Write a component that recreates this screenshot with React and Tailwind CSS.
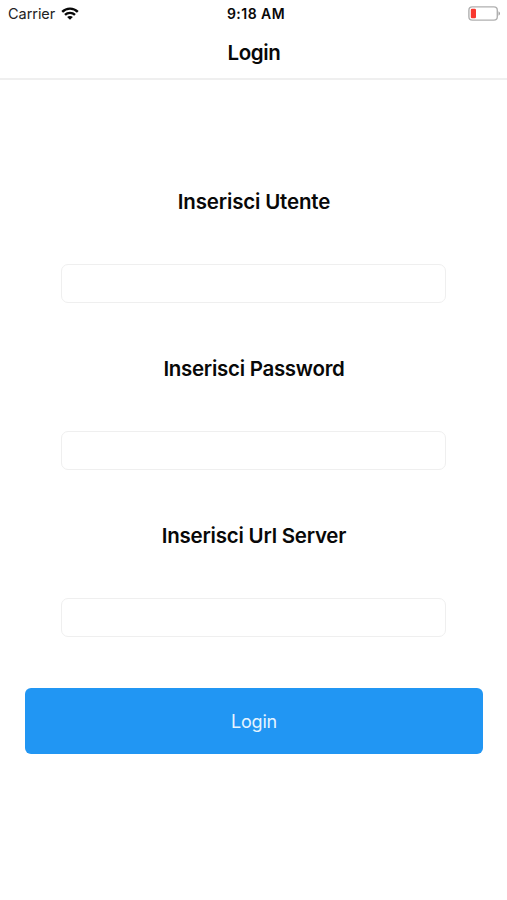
const fields = [
  { id: 'user', label: 'Inserisci Utente', type: 'text', spacing: 'tracking-[-0.17px]' },
  { id: 'password', label: 'Inserisci Password', type: 'password', spacing: 'tracking-[-0.28px]' },
  { id: 'server', label: 'Inserisci Url Server', type: 'text', spacing: 'tracking-[-0.23px]' },
];

function WifiIcon() {
  return (
    <svg className="mb-[2px] ml-[6px] h-[13px] w-[18px]" viewBox="0 0 18 13" fill="none" stroke="#080808" strokeWidth="2.4">
      <path d="M1.2 4.8C5.5.5 12.5.5 16.8 4.8" />
      <path d="M4 7.9c2.8-2.7 7.2-2.7 10 0" />
      <path d="M9 12.8 6.1 10c1.6-1.5 4.2-1.5 5.8 0Z" fill="#080808" stroke="none" />
    </svg>
  );
}

function BatteryIcon() {
  return (
    <svg className="mb-[2px] h-[15px] w-[33px]" viewBox="0 0 33 15" fill="none">
      <rect x=".9" y=".9" width="28.4" height="13.2" rx="3.4" stroke="#b0b0b0" strokeWidth="1.4" />
      <rect x="2.8" y="2.8" width="5.2" height="9.4" rx="1.2" fill="#f8372f" />
      <path d="M30.5 5.3c2 .8 2 3.6 0 4.4Z" fill="#a0a0a0" />
    </svg>
  );
}

export default function App() {
  return (
    <div className="flex h-[900px] w-[507px] flex-col bg-white font-['Inter',sans-serif] text-[#080808]">
      <header className="h-20 border-b-2 border-[#efefef]">
        <div className="grid h-7 grid-cols-3 items-center pr-[6px] pl-2">
          <div className="flex items-center text-[14.5px] text-[#222]">
            <span className="tracking-[-0.05px]">Carrier</span>
            <WifiIcon />
          </div>
          <span className="pb-[2px] pl-[3px] text-center text-[14px] font-semibold tracking-[0.45px]">9:18 AM</span>
          <div className="flex justify-end">
            <BatteryIcon />
          </div>
        </div>
        <h1 className="pl-px text-center text-[20.5px] leading-[49px] font-semibold tracking-[-0.35px]">Login</h1>
      </header>
      <form className="flex flex-col">
        <div className="flex flex-col gap-12 px-[61px] pt-[105px]">
          {fields.map((field) => (
            <div key={field.id} className="flex h-[119px] flex-col">
              <label
                htmlFor={field.id}
                className={`mb-[45px] pl-px text-center text-[20.5px] leading-[34px] font-semibold ${field.spacing}`}
              >
                {field.label}
              </label>
              <input
                id={field.id}
                type={field.type}
                className="h-[39px] w-full rounded-[7px] border-[1.5px] border-[#efefef] bg-white px-3 outline-none"
              />
            </div>
          ))}
        </div>
        <button
          type="button"
          className="mr-[24px] ml-[25px] mt-[50px] h-[66px] rounded-[6px] bg-[#2196f3] text-[18px] tracking-[-0.2px] text-[#e6f4ff]"
        >
          Login
        </button>
      </form>
    </div>
  );
}
